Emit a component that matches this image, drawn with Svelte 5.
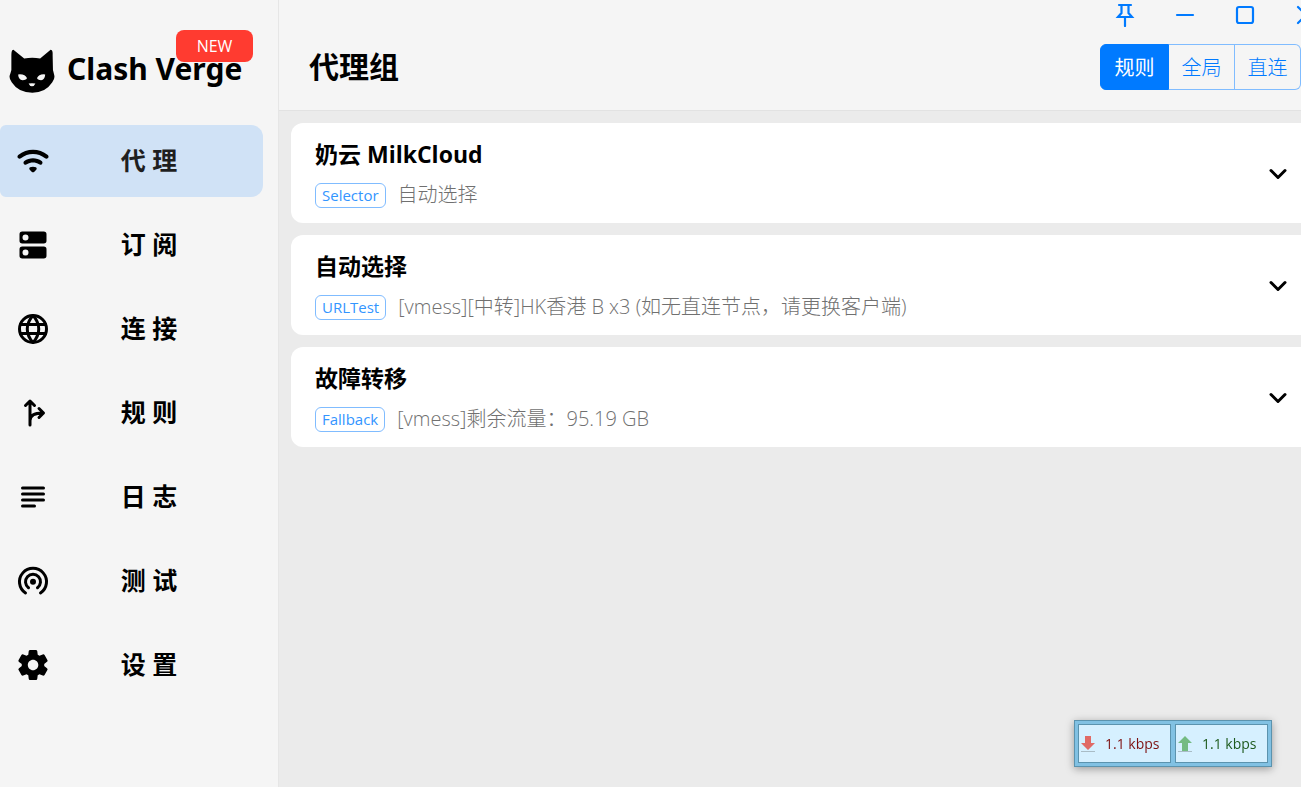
<script lang="ts">
	interface Group {
		name: string;
		type: string;
		now: string;
	}

	const menu = [
		{ icon: 'wifi', label: '代 理' },
		{ icon: 'dns', label: '订 阅' },
		{ icon: 'globe', label: '连 接' },
		{ icon: 'fork', label: '规 则' },
		{ icon: 'subject', label: '日 志' },
		{ icon: 'tether', label: '测 试' },
		{ icon: 'settings', label: '设 置' }
	];

	const modes = ['规则', '全局', '直连'];

	const groups: Group[] = [
		{ name: '奶云 MilkCloud', type: 'Selector', now: '自动选择' },
		{
			name: '自动选择',
			type: 'URLTest',
			now: '[vmess][中转]HK香港 B x3 (如无直连节点，请更换客户端)'
		},
		{ name: '故障转移', type: 'Fallback', now: '[vmess]剩余流量：95.19 GB' }
	];

	let current = $state('wifi');
	let mode = $state('规则');
</script>

<div class="layout">
	<aside class="sidebar">
		<div class="brand">
			<svg class="brand__logo" viewBox="28 28 136 130" aria-hidden="true">
				<path
					fill-rule="evenodd"
					d="M41 30 73 56Q97 52 120 56L151 30Q158 30 157 46L158 90Q160 98 162 106Q164 116 156 126Q136 157 97 157Q56 157 36 126Q28 116 30 106Q33 98 35 90L35 46Q35 30 41 30ZM55 103Q56 118 68 120Q80 120 81 114Q76 101 55 103ZM135 103Q134 118 123 120Q112 120 111 114Q116 101 135 103ZM86 130Q96 128 106 130Q103 138 96 138Q89 138 86 130Z" />
			</svg>
			<span class="brand__name">Clash Verge</span>
			<button class="brand__badge">NEW</button>
		</div>

		<nav class="menu">
			{#each menu as item}
				<button
					class="menu__item"
					class:selected={current === item.icon}
					onclick={() => (current = item.icon)}>
					<svg class="menu__icon" viewBox="0 0 24 24" aria-hidden="true">
						{#if item.icon === 'wifi'}
							<path
								d="M2.06 10.06c.51.51 1.32.56 1.87.1 4.67-3.84 11.45-3.84 16.13-.01.56.46 1.38.42 1.89-.09.59-.59.55-1.57-.1-2.1-5.71-4.67-13.97-4.67-19.69 0-.65.52-.7 1.5-.1 2.1zm7.76 7.76 1.47 1.47c.39.39 1.02.39 1.41 0l1.47-1.47c.47-.47.37-1.28-.23-1.59-1.22-.63-2.68-.63-3.91 0-.57.31-.68 1.12-.21 1.59zm-3.73-3.73c.49.49 1.26.54 1.83.13 2.44-1.73 5.72-1.73 8.16 0 .57.4 1.34.36 1.83-.13l.01-.01c.6-.6.56-1.62-.13-2.11-3.44-2.49-8.13-2.49-11.58 0-.69.5-.73 1.51-.12 2.12z" />
						{:else if item.icon === 'dns'}
							<path
								fill-rule="evenodd"
								d="M4.8 3h14.4q1.8 0 1.8 1.8v4.4q0 1.8-1.8 1.8H4.8q-1.8 0-1.8-1.8V4.8q0-1.8 1.8-1.8zM7 5a2 2 0 1 0 0 4 2 2 0 0 0 0-4zM4.8 13h14.4q1.8 0 1.8 1.8v4.4q0 1.8-1.8 1.8H4.8q-1.8 0-1.8-1.8v-4.400q0-1.8 1.8-1.8zM7 15a2 2 0 1 0 0 4 2 2 0 0 0 0-4z" />
						{:else if item.icon === 'globe'}
							<g class="line">
								<circle cx="12" cy="12" r="9" />
								<path d="M3.6 9h16.8M3.6 15h16.8M12 3C6.9 8.5 6.9 15.5 12 21M12 3c5.1 5.5 5.1 12.5 0 18" />
							</g>
						{:else if item.icon === 'fork'}
							<g class="line">
								<path d="M10 20V4.500M7 7l3-3 3 3M10 17c0-3.500 3-5 8.500-5M16 9l3 3-3 3" />
							</g>
						{:else if item.icon === 'subject'}
							<g class="line">
								<path d="M5 6h14M5 10h14M5 14h14M5 18h8" />
							</g>
						{:else if item.icon === 'tether'}
							<circle cx="12" cy="12.500" r="2" />
							<g class="line">
								<path d="M9 16.500a5 5 0 1 1 6 0M7 20a9 9 0 1 1 10 0" />
							</g>
						{:else}
							<path
								d="M19.5 12c0-.23-.01-.45-.03-.68l1.86-1.41c.4-.3.51-.86.26-1.3l-1.87-3.23c-.25-.44-.79-.62-1.25-.42l-2.15.91c-.37-.26-.76-.49-1.17-.68l-.29-2.31c-.06-.5-.49-.88-.99-.88h-3.73c-.51 0-.94.38-1 .88l-.29 2.31c-.41.19-.8.42-1.17.68l-2.15-.91c-.46-.2-1-.02-1.25.42L2.41 8.62c-.25.44-.14.99.26 1.3l1.86 1.41c-.02.22-.03.44-.03.67s.01.45.03.68l-1.86 1.41c-.4.3-.51.86-.26 1.3l1.87 3.23c.25.44.79.62 1.25.42l2.15-.91c.37.26.76.49 1.17.68l.29 2.31c.06.5.49.88.99.88h3.73c.5 0 .93-.38.99-.88l.29-2.31c.41-.19.8-.42 1.17-.68l2.15.91c.46.2 1 .02 1.25-.42l1.87-3.23c.25-.44.14-.99-.26-1.3l-1.86-1.41c.03-.23.04-.45.04-.68zm-7.46 3.5c-1.93 0-3.5-1.57-3.5-3.5s1.57-3.5 3.5-3.5 3.5 1.57 3.5 3.5-1.57 3.5-3.5 3.5z" />
						{/if}
					</svg>
					<span class="menu__label">{item.label}</span>
				</button>
			{/each}
		</nav>
	</aside>

	<main class="page">
		<header class="header">
			<div class="window">
				<button class="window__button" aria-label="置顶">
					<svg viewBox="0 0 24 24"><path d="M6 2h12M8.500 2v8L5 14h14l-3.500-4V2M12 14v9" /></svg>
				</button>
				<button class="window__button" aria-label="最小化">
					<svg viewBox="0 0 24 24"><path d="M4 12h16" /></svg>
				</button>
				<button class="window__button" aria-label="最大化">
					<svg viewBox="0 0 24 24"><rect x="4" y="4" width="16" height="16" rx="2" /></svg>
				</button>
				<button class="window__button" aria-label="关闭">
					<svg viewBox="0 0 24 24"><path d="m5 4 16 16M21 4 5 20" /></svg>
				</button>
			</div>
			<div class="header__row">
				<h1 class="header__title">代理组</h1>
				<div class="modes">
					{#each modes as item}
						<button class="modes__item" class:active={mode === item} onclick={() => (mode = item)}>
							{item}
						</button>
					{/each}
				</div>
			</div>
		</header>

		<div class="groups">
			{#each groups as group}
				<button class="group">
					<span class="group__body">
						<span class="group__name">{group.name}</span>
						<span class="group__info">
							<span class="group__type">{group.type}</span>
							<span class="group__now">{group.now}</span>
						</span>
					</span>
					<svg class="group__arrow" viewBox="0 0 24 24" aria-hidden="true">
						<path d="m5 8.500 7 7 7-7" />
					</svg>
				</button>
			{/each}
		</div>
	</main>

	<div class="traffic">
		<div class="traffic__cell down">
			<svg viewBox="0 0 16 18" aria-hidden="true">
				<path class="traffic__base" d="M1 16.500h14" />
				<path d="M5 1h6v7h4l-7 7-7-7h4z" />
			</svg>
			<span>1.1 kbps</span>
		</div>
		<div class="traffic__cell up">
			<svg viewBox="0 0 16 18" aria-hidden="true">
				<path class="traffic__base" d="M1 16.500h14" />
				<path d="m8 1 7 7h-4v8H5V8H1z" />
			</svg>
			<span>1.1 kbps</span>
		</div>
	</div>
</div>

<style>
	:global(body) {
		margin: 0;
		overflow: hidden;
	}

	button {
		margin: 0;
		padding: 0;
		border: 0;
		background: none;
		color: inherit;
		font: inherit;
		cursor: pointer;
	}

	.layout {
		display: flex;
		height: 100vh;
		background: #ebebeb;
		color: #000;
		font-family: 'Open Sans', 'Noto Sans CJK SC', sans-serif;
	}

	.sidebar {
		box-sizing: border-box;
		flex: 0 0 279px;
		border-right: 1px solid #e6e6e6;
		background: #f5f5f5;
	}

	.brand {
		position: relative;
		display: flex;
		align-items: center;
		gap: 12px;
		height: 85px;
		padding: 28px 0 12px 9px;
	}

	.brand__logo {
		width: 46px;
		height: 44px;
	}

	.brand__name {
		padding-bottom: 4px;
		font-size: 30px;
		font-weight: 700;
		line-height: 40px;
		font-family: 'Noto Sans', sans-serif;
		white-space: nowrap;
	}

	.brand__badge {
		position: absolute;
		top: 30px;
		right: 25px;
		width: 77px;
		height: 32px;
		border-radius: 8px;
		background: #ff3b30;
		color: #fff;
		font-size: 16px;
	}

	.menu {
		display: flex;
		flex-direction: column;
		gap: 12px;
		padding-right: 15px;
	}

	.menu__item {
		display: flex;
		align-items: center;
		height: 72px;
		padding: 0 16px 0 15px;
		border-radius: 6px 12px 12px 6px;
	}

	.menu__item.selected {
		background: #d0e2f6;

		& .menu__label {
			color: #1f1f1f;
		}
	}

	.menu__icon {
		width: 36px;
		height: 36px;
	}

	.line {
		fill: none;
		stroke: #000;
		stroke-width: 2;
		stroke-linecap: round;
		stroke-linejoin: round;
	}

	.menu__label {
		flex: 1;
		padding-bottom: 4px;
		font-size: 25px;
		font-weight: 700;
		text-align: center;
	}

	.page {
		flex: 1;
		min-width: 0;
		overflow: hidden;
	}

	.header {
		padding-bottom: 6px;
		border-bottom: 1px solid #e2e2e2;
		background: #f5f5f5;
	}

	.window {
		display: flex;
		justify-content: flex-end;
		margin-right: -34px;
	}

	.window__button {
		display: flex;
		align-items: center;
		justify-content: center;
		width: 60px;
		height: 30px;

		& svg {
			width: 24px;
			height: 24px;
			fill: none;
			stroke: #007aff;
			stroke-width: 2.2;
			stroke-linecap: round;
		}
	}

	.header__row {
		display: flex;
		align-items: center;
		justify-content: space-between;
		height: 74px;
		padding-left: 30px;
	}

	.header__title {
		margin: 0;
		font-size: 30px;
		font-weight: 700;
		line-height: 40px;
	}

	.modes {
		display: flex;
		height: 46px;
	}

	.modes__item {
		box-sizing: border-box;
		width: 66px;
		padding-bottom: 2px;
		border: 1px solid #80bcff;
		border-left-width: 0;
		color: #007aff;
		font-size: 20px;
		font-weight: 300;
	}

	.modes__item:first-child {
		width: 69px;
		border-radius: 6px 0 0 6px;
	}

	.modes__item:last-child {
		border-radius: 0 6px 6px 0;
	}

	.modes__item.active {
		border-color: #007aff;
		border-left-width: 1px;
		background: #007aff;
		color: #fff;
		font-weight: 400;
	}

	.groups {
		display: flex;
		flex-direction: column;
		gap: 12px;
		padding: 12px 0 12px 12px;
	}

	.group {
		display: flex;
		align-items: center;
		justify-content: space-between;
		padding: 13px 11px 12px 24px;
		border-radius: 12px 0 0 12px;
		background: #fff;
		text-align: left;
	}

	.group__body {
		display: flex;
		flex-direction: column;
		gap: 7px;
	}

	.group__name {
		font-size: 23px;
		font-weight: 700;
		line-height: 36px;
	}

	.group__info {
		display: flex;
		align-items: center;
		gap: 12px;
		line-height: 32px;
	}

	.group__type {
		padding: 0 6px;
		border: 1px solid #80bcff;
		border-radius: 6px;
		color: #3395ff;
		font-size: 15px;
		line-height: 23px;
	}

	.group__now {
		color: #707070;
		font-size: 20px;
		font-weight: 300;
	}

	.group__arrow {
		width: 24px;
		height: 24px;
		fill: none;
		stroke: #000;
		stroke-width: 3;
		stroke-linecap: round;
		stroke-linejoin: round;
	}

	.traffic {
		position: fixed;
		right: 29px;
		bottom: 20px;
		display: flex;
		gap: 4px;
		padding: 3px;
		border: 1px solid #5b93ae;
		background: #81c1e3;
		box-shadow: 0 2px 8px rgba(0, 0, 0, 0.35);
	}

	.traffic__cell {
		box-sizing: border-box;
		display: flex;
		align-items: center;
		gap: 9px;
		width: 93px;
		height: 39px;
		padding-left: 1px;
		border: 1px solid #5b93ae;
		background: #d6f0ff;
		font-size: 14px;
		white-space: nowrap;

		& svg {
			width: 16px;
			height: 18px;
		}
	}

	.traffic__base {
		stroke: #a9bcc6;
	}

	.down {
		color: #7d1010;
		fill: #e06a66;
	}

	.up {
		color: #1d5a1d;
		fill: #74bb82;
	}
</style>
